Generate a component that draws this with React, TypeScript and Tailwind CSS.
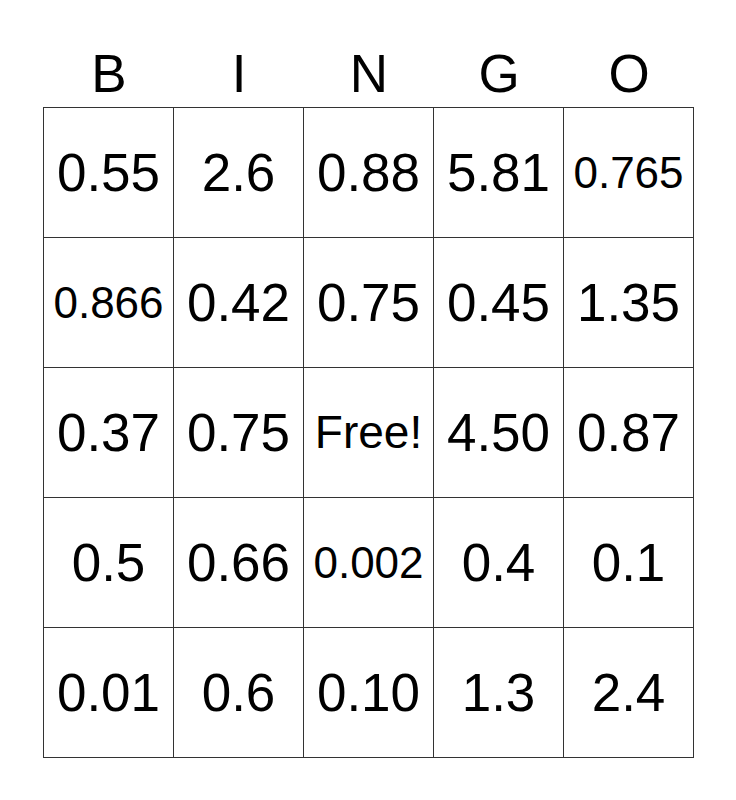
import React from "react";

const headers = ["B", "I", "N", "G", "O"];
const rows: string[][] = [
  ["0.55", "2.6", "0.88", "5.81", "0.765"],
  ["0.866", "0.42", "0.75", "0.45", "1.35"],
  ["0.37", "0.75", "Free!", "4.50", "0.87"],
  ["0.5", "0.66", "0.002", "0.4", "0.1"],
  ["0.01", "0.6", "0.10", "1.3", "2.4"],
];

const small = new Set(["0.765", "0.866", "0.002"]);

export default function App() {
  return (
    <div
      className="w-[736px] h-[800px] bg-white text-black"
      style={{ fontFamily: '"Liberation Sans", Arial, sans-serif' }}
    >
      <div className="pl-[43px] pt-[47px]">
        <div className="flex w-[651px] pl-[1px]">
          {headers.map((h) => (
            <div key={h} className="w-[130px] text-center text-[53px] leading-[53px]">
              {h}
            </div>
          ))}
        </div>
        <div className="mt-[7px] w-[651px] border-l border-t border-[#333]">
          {rows.map((r, i) => (
            <div key={i} className="flex">
              {r.map((c, j) => (
                <div
                  key={j}
                  className={
                    "w-[130px] h-[130px] flex items-center justify-center border-r border-b border-[#333] whitespace-nowrap " +
                    (c === "Free!"
                      ? "text-[46px]"
                      : small.has(c)
                      ? "text-[44px]"
                      : "text-[53px]")
                  }
                >
                  {c}
                </div>
              ))}
            </div>
          ))}
        </div>
      </div>
    </div>
  );
}
